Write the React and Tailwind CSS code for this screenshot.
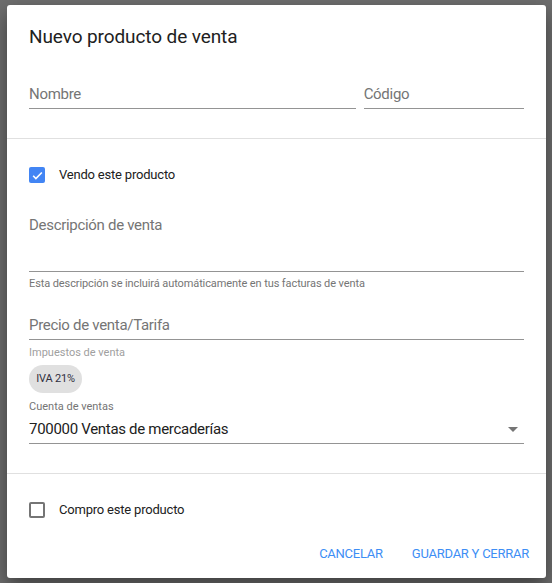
import { useState } from "react";

// Dialog "Nuevo producto de venta" over a dimmed page
export default function App() {
  const [sells, setSells] = useState(true);
  const [buys, setBuys] = useState(false);

  return (
    <div
      className="w-[552px] h-[583px] bg-[#6e6e6e] pt-[5px] pl-[7px] overflow-hidden"
      style={{ fontFamily: "Roboto, 'Liberation Sans', sans-serif" }}
    >
      <div className="w-[539px] h-[573px] bg-white rounded-[3px] shadow-[0_8px_20px_rgba(0,0,0,0.45)] flex flex-col">
        {/* HEADER + NAME / CODE */}
        <div className="px-[22px] pt-[20px] pb-[29px] border-b border-[#e0e0e0]">
          <h1 className="text-[19px] leading-[24px] tracking-[-0.1px] text-[#212121]">Nuevo producto de venta</h1>
          <div className="flex gap-[8px] mt-[29px]">
            <Field label="Nombre" className="w-[328px]" />
            <Field label="Código" className="w-[161px]" />
          </div>
        </div>

        {/* SALE SECTION */}
        <div className="px-[22px] pt-[24px] pb-[29px] border-b border-[#e0e0e0]">
          <Check checked={sells} onChange={() => setSells(!sells)} label="Vendo este producto" />

          <div className="mt-[25px] h-[60px] border-b border-[#949494] pt-[1px]">
            <span className="text-[15px] leading-[19px] tracking-[-0.3px] text-[#757575]">Descripción de venta</span>
          </div>
          <p className="mt-[5px] text-[11px] leading-[13px] tracking-[-0.1px] text-[#757575]">
            Esta descripción se incluirá automáticamente en tus facturas de venta
          </p>

          <Field label="Precio de venta/Tarifa" className="mt-[19px]" />

          <p className="mt-[6px] text-[11px] leading-[14px] text-[#a0a0a0]">Impuestos de venta</p>
          <div className="mt-[5px] w-[53px] h-[28px] rounded-full bg-[#e0e0e0] flex items-center justify-center text-[11px] tracking-[-0.2px] text-[#303040]">
            IVA 21%
          </div>

          <p className="mt-[7px] text-[11px] leading-[14px] text-[#757575]">Cuenta de ventas</p>
          <div className="h-[30px] border-b border-[#949494] flex items-center justify-between pr-[6px] pt-[1px]">
            <span className="text-[15px] tracking-[-0.3px] text-[#212121]">700000 Ventas de mercaderías</span>
            <svg width="10" height="5" viewBox="0 0 10 5">
              <path d="M0 0h10L5 5z" fill="#757575" />
            </svg>
          </div>
        </div>

        {/* PURCHASE + ACTIONS */}
        <div className="px-[22px] pt-[24px]">
          <Check checked={buys} onChange={() => setBuys(!buys)} label="Compro este producto" />
        </div>
        <div className="flex justify-end gap-[29px] pr-[17px] mt-[14px] h-[36px] items-center">
          <button className="text-[13px] tracking-[-0.25px] text-[#3d8ef5] uppercase">Cancelar</button>
          <button className="text-[13px] tracking-[-0.25px] text-[#3d8ef5] uppercase">Guardar y cerrar</button>
        </div>
      </div>
    </div>
  );
}

function Field({ label, className = "" }) {
  return (
    <div className={`h-[31px] border-b border-[#949494] flex items-center pt-[3px] ${className}`}>
      <span className="text-[15px] tracking-[-0.3px] text-[#757575]">{label}</span>
    </div>
  );
}

function Check({ checked, onChange, label }) {
  return (
    <button onClick={onChange} className="flex items-center gap-[14px] h-[24px]">
      {checked ? (
        <span className="w-[16px] h-[16px] rounded-[2px] bg-[#4285f4] flex items-center justify-center">
          <svg width="13" height="13" viewBox="0 0 24 24">
            <path d="M4 12.5l5 5L20 6.5" stroke="white" strokeWidth="3" fill="none" />
          </svg>
        </span>
      ) : (
        <span className="w-[16px] h-[16px] rounded-[2px] border-2 border-[#757575]" />
      )}
      <span className="text-[13px] tracking-[-0.2px] text-[#212121]">{label}</span>
    </button>
  );
}
